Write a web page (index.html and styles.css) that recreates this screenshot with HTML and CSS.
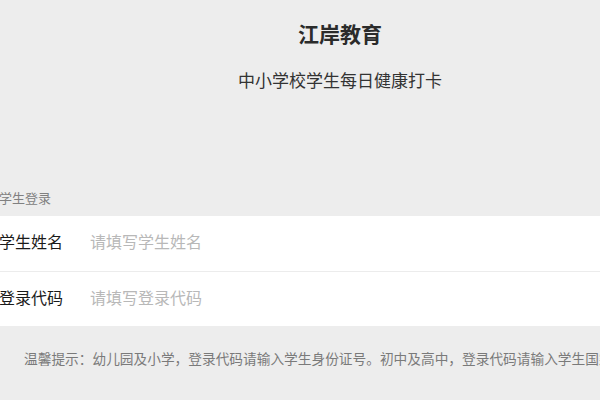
FILE: index.html
```html
<!DOCTYPE html>
<html lang="zh-CN">
<head>
  <meta charset="UTF-8">
  <meta name="viewport" content="width=device-width, initial-scale=1.0">
  <title>江岸教育</title>
  <link rel="stylesheet" href="styles.css">
</head>
<body>
  <div class="page">
    <div class="header">
      <h1 class="title">江岸教育</h1>
      <p class="subtitle">中小学校学生每日健康打卡</p>
    </div>

    <div class="cells-title">学生登录</div>
    <form class="cells" id="loginForm">
      <div class="cell">
        <label class="cell-label" for="name">学生姓名</label>
        <input class="cell-input" type="text" id="name" name="name" placeholder="请填写学生姓名">
      </div>
      <div class="cell">
        <label class="cell-label" for="code">登录代码</label>
        <input class="cell-input" type="text" id="code" name="code" placeholder="请填写登录代码">
      </div>
    </form>

    <p class="tips">温馨提示：幼儿园及小学，登录代码请输入学生身份证号。初中及高中，登录代码请输入学生国籍学号。</p>
  </div>
</body>
</html>
```

FILE: styles.css
```css
html, body {
  margin: 0;
  overflow: hidden;
  background-color: #ededed;
}

body {
  font-family: "Noto Sans CJK SC", "Noto Sans", sans-serif;
  color: #333;
}

.page {
  width: 712px;
  margin-left: -16px;
}

.header {
  padding-top: 18px;
  text-align: center;
}

.title {
  margin: 0;
  font-size: 21px;
  line-height: 30px;
  font-weight: bold;
  color: #2b2b2b;
}

.subtitle {
  margin: 17px 0 0;
  font-size: 17px;
  line-height: 30px;
  color: #333;
}

.cells-title {
  margin-top: 93px;
  padding: 0 15px;
  font-size: 13px;
  line-height: 20px;
  color: #808080;
}

.cells {
  margin-top: 8px;
  background-color: #fff;
}

.cell {
  display: flex;
  align-items: center;
  height: 50px;
  padding: 0 15px 5px;
}

.cell + .cell {
  border-top: 1px solid #ececec;
  height: 49px;
  padding-bottom: 5px;
}

.cell-label {
  width: 91px;
  flex-shrink: 0;
  font-size: 16px;
  color: #1a1a1a;
}

.cell-input {
  flex: 1;
  border: none;
  outline: none;
  padding: 0;
  font-family: inherit;
  font-size: 16px;
  background: transparent;
}

.cell-input::placeholder {
  color: #b8b8b8;
}

.tips {
  margin: 22px 0 0;
  padding: 0 40px;
  font-size: 13.7px;
  line-height: 20px;
  color: #7a7a7a;
  white-space: nowrap;
}
```
